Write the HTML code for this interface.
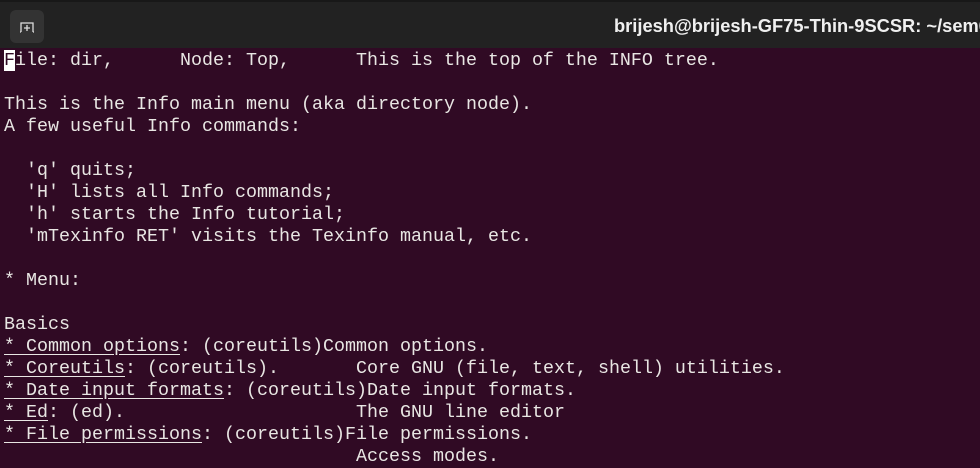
<!DOCTYPE html>
<html><head><style>
body{margin:0;width:980px;height:458px;overflow:hidden;background:#300a24;position:relative}
.bar{position:absolute;left:0;top:0;width:980px;height:48px;background:#222222;border-top:2px solid #181818;box-sizing:border-box}
.btn{position:absolute;left:10px;top:8px;width:34px;height:33px;background:#333;border-radius:6px}
.title{position:absolute;left:614px;top:13px;font:bold 18.3px "Liberation Sans",sans-serif;color:#f0f0f0;white-space:nowrap}
pre{position:absolute;left:4px;top:50px;margin:0;font:18.33px/22px "Liberation Mono",monospace;color:#e8e6e3}
.cur{background:#fff;color:#300a24}
u{text-decoration:underline;text-underline-offset:3px}
</style></head><body>
<div class="bar"><div class="btn"><svg width="34" height="33" viewBox="0 0 34 33"><path d="M11 22v-9h12v9M11 22h-1M23 22h1M17 15v6M14 18h6" stroke="#ddd" stroke-width="1.3" fill="none"/></svg></div>
<div class="title">brijesh@brijesh-GF75-Thin-9SCSR: ~/sem6</div></div>
<pre><span class="cur">F</span>ile: dir,      Node: Top,      This is the top of the INFO tree.

This is the Info main menu (aka directory node).
A few useful Info commands:

  'q' quits;
  'H' lists all Info commands;
  'h' starts the Info tutorial;
  'mTexinfo RET' visits the Texinfo manual, etc.

* Menu:

Basics
<u>* Common options</u>: (coreutils)Common options.
<u>* Coreutils</u>: (coreutils).       Core GNU (file, text, shell) utilities.
<u>* Date input formats</u>: (coreutils)Date input formats.
<u>* Ed</u>: (ed).                     The GNU line editor
<u>* File permissions</u>: (coreutils)File permissions.
                                Access modes.</pre>
</body></html>
